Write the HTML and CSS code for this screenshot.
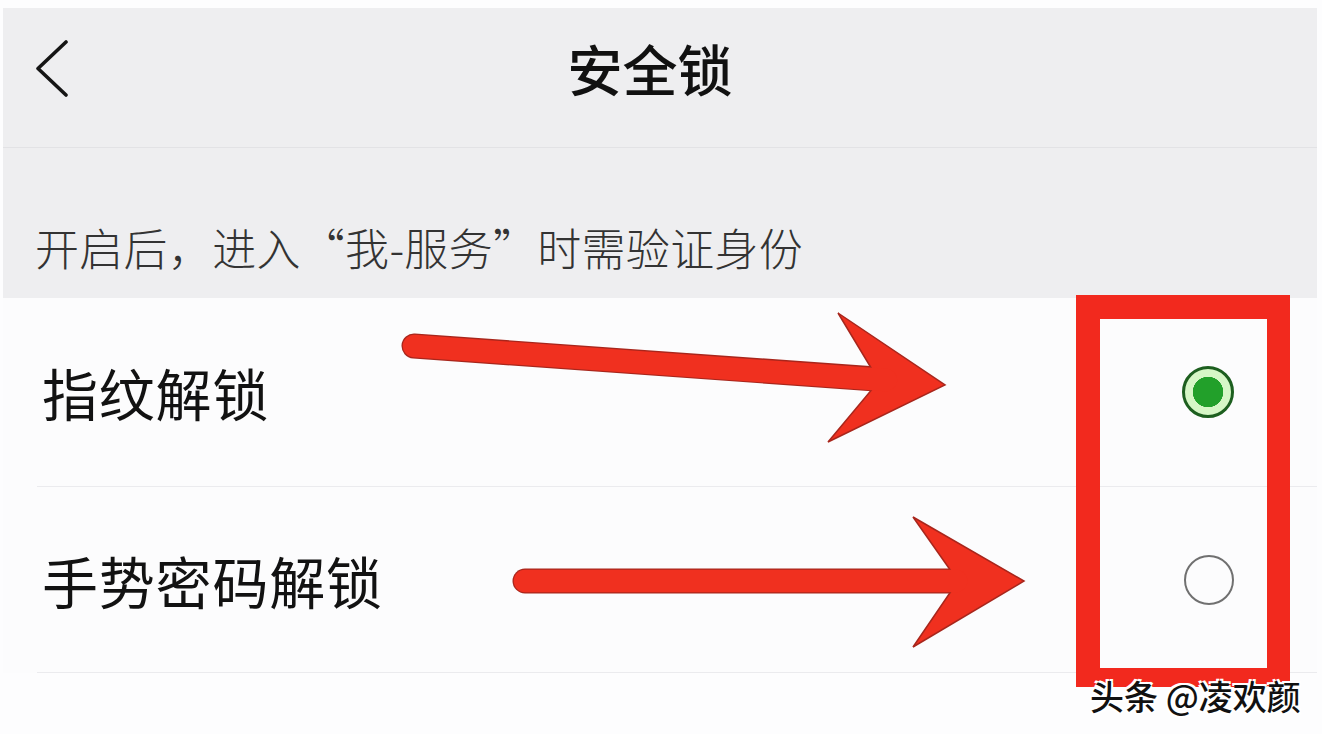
FILE: index.html
```html
<!DOCTYPE html>
<html lang="zh-CN">
<head>
<meta charset="UTF-8" />
<meta name="viewport" content="width=device-width, initial-scale=1.0" />
<title>安全锁</title>
<link rel="stylesheet" href="styles.css">
</head>
<body>
<div class="screen">
  <div class="topbar">
    <div class="back">
      <svg width="32" height="57" viewBox="0 0 32 57">
        <polyline points="30,2 2,28.5 30,55" fill="none" stroke="#151515" stroke-width="3.6" stroke-linecap="round" stroke-linejoin="round"/>
      </svg>
    </div>
    <h1 class="title">安全锁</h1>
    <div></div>
  </div>

  <div class="notice">开启后，进入“我-服务”时需验证身份</div>

  <div class="list">
    <div class="row">
      <span class="label">指纹解锁</span>
      <span class="radio checked"></span>
    </div>
    <div class="row">
      <span class="label">手势密码解锁</span>
      <span class="radio"></span>
    </div>
  </div>
</div>

<!-- annotations drawn over the screenshot -->
<svg class="arrows" width="1322" height="734" viewBox="0 0 1322 734">
  <g>
    <line x1="414" y1="346" x2="890" y2="380" stroke="#a8261c" stroke-width="25" stroke-linecap="round"/>
    <polygon points="838,313 945,385 828,442 879,381" fill="#f0301f" stroke="#a8261c" stroke-width="1.5" stroke-linejoin="miter"/>
    <line x1="414" y1="346" x2="886" y2="380" stroke="#f0301f" stroke-width="22.5" stroke-linecap="round"/>
  </g>
  <g>
    <line x1="525" y1="581" x2="960" y2="581" stroke="#a8261c" stroke-width="25" stroke-linecap="round"/>
    <polygon points="913,517 1024,581 913,647 958,581" fill="#f0301f" stroke="#a8261c" stroke-width="1.5"/>
    <line x1="525" y1="581" x2="956" y2="581" stroke="#f0301f" stroke-width="22.5" stroke-linecap="round"/>
  </g>
</svg>
<div class="highlight"></div>
<div class="watermark">头条 @凌欢颜</div>
</body>
</html>
```

FILE: styles.css
```css
body {
margin: 0;
background: #fdfdfe;
font-family: "Noto Sans CJK SC", "Noto Sans", sans-serif;
color: #141414;
width: 1322px;
height: 734px;
overflow: hidden;
position: relative;
}

.screen {
margin: 8px 0 0 3px;
width: 1314px;
}

.topbar {
height: 140px;
box-sizing: border-box;
padding-bottom: 22px;
background: #eeeef0;
border-bottom: 1px solid #e2e2e5;
display: grid;
grid-template-columns: 1fr auto 1fr;
align-items: center;
}

.back {
padding-left: 33px;
height: 57px;
margin-top: 4px;
}

.back svg {
display: block;
}

.title {
margin: 0 20px 0 0;
font-size: 55px;
font-weight: 500;
line-height: 60px;
color: #111;
}

.notice {
height: 150px;
box-sizing: border-box;
padding: 76px 0 0 32px;
background: #eeeef0;
font-size: 44px;
line-height: 46px;
font-weight: 300;
letter-spacing: 0.3px;
color: #333;
}

.list {
background: #fcfcfd;
}

.row {
height: 188px;
margin-left: 34px;
padding: 0 83px 0 5px;
border-bottom: 1px solid #ebebee;
display: flex;
align-items: center;
justify-content: space-between;
}

.row + .row {
height: 185px;
}

.label {
font-size: 56px;
line-height: 60px;
letter-spacing: 0.8px;
color: #121212;
}

.radio {
width: 50px;
height: 50px;
box-sizing: border-box;
border: 2px solid #707070;
border-radius: 50%;
}

.radio.checked {
width: 52px;
height: 52px;
border: 3px solid #1d5f1f;
background: radial-gradient(circle, #22a02a 0 15px, #d6f7c6 15.5px);
}

.arrows {
position: absolute;
left: 0;
top: 0;
pointer-events: none;
}

.highlight {
position: absolute;
left: 1076px;
top: 295px;
width: 167px;
height: 349px;
border: solid #f2291e;
border-width: 24px 23px 19px 24px;
}

.watermark {
position: absolute;
left: 1090px;
top: 674px;
font-size: 34px;
line-height: 44px;
font-weight: 500;
color: #111;
text-shadow: -2px -2px 0 #fff, 2px 2px 0 #fff, -2px 2px 0 #fff, 2px -2px 0 #fff;
}
```
